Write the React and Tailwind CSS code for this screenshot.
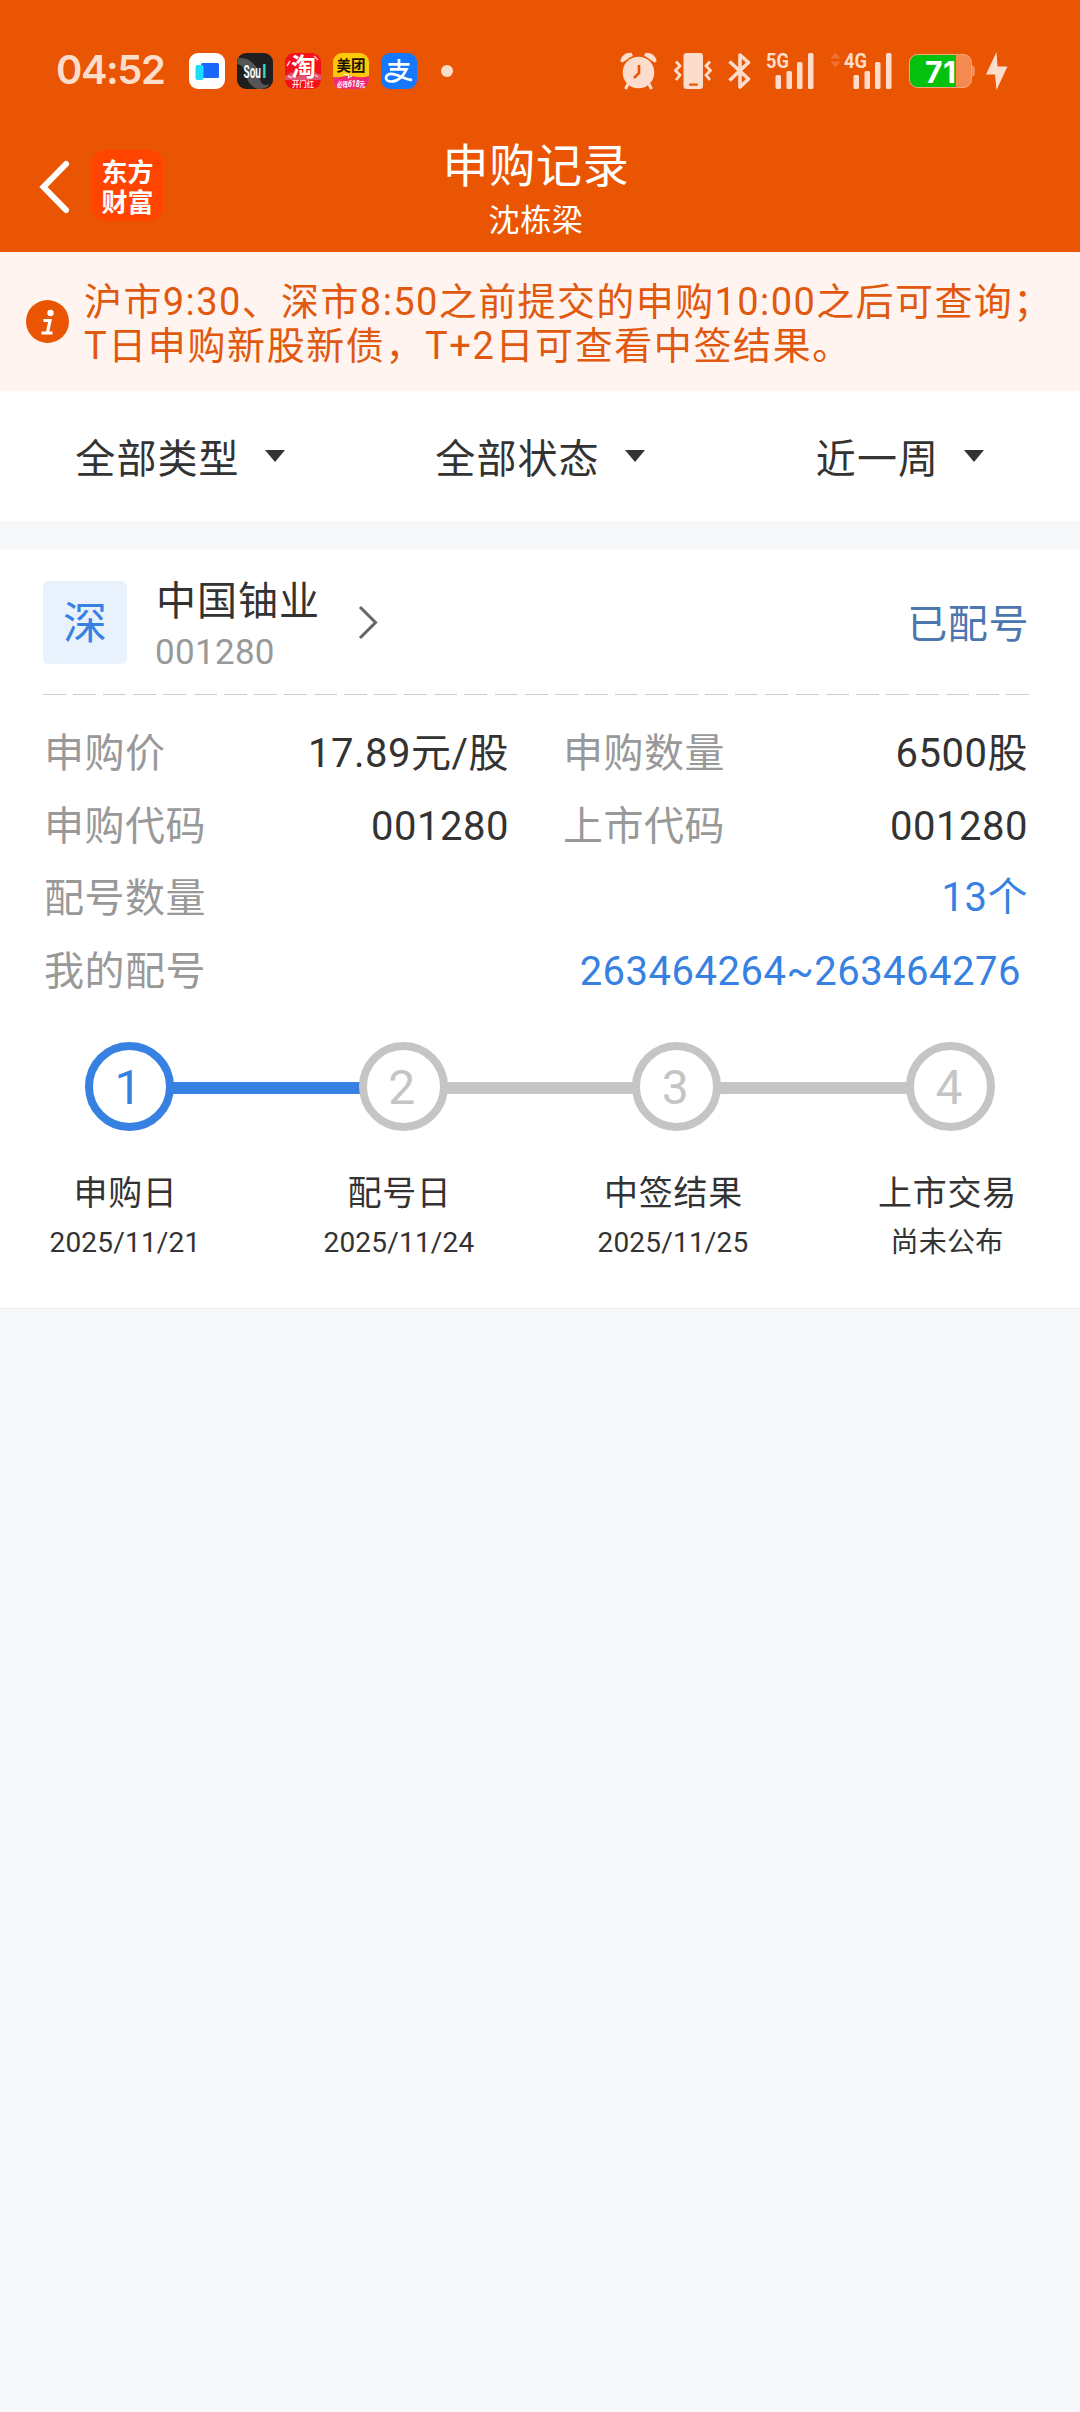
const FILTERS = ['全部类型', '全部状态', '近一周'];

const STEPS = [
    { title: '申购日', date: '2025/11/21', active: true },
    { title: '配号日', date: '2025/11/24' },
    { title: '中签结果', date: '2025/11/25' },
    { title: '上市交易', date: '尚未公布' },
];

const SignalBars = ({ label, arrows }) => (
    <svg className="overflow-visible" width={arrows ? 61 : 48} height="38" viewBox={arrows ? '-13 0 61 38' : '0 0 48 38'} fill="#fcddcb">
        {arrows && (
            <g fill="#f07234">
                <path d="M-8.5 0.5l5 6h-10z" />
                <path d="M-8.5 15.5l5-6h-10z" />
            </g>
        )}
        <text x="0" y="16" fontSize="21" fontWeight="700" textLength="23" lengthAdjust="spacingAndGlyphs" className="font-['Roboto']">
            {label}
        </text>
        <rect x="9.5" y="23" width="5.5" height="14" rx="1.5" />
        <rect x="20.5" y="19" width="5.5" height="18" rx="1.5" />
        <rect x="31" y="10" width="5.5" height="27" rx="1.5" />
        <rect x="42" y="1" width="5.5" height="36" rx="1.5" />
    </svg>
);

const AppIcons = () => (
    <div className="flex gap-3">
        <svg width="36" height="36" viewBox="0 0 36 36">
            <rect width="36" height="36" rx="9" fill="#fff" />
            <rect x="12" y="10" width="18" height="15" rx="1.5" fill="#1b66ff" />
            <rect x="6.5" y="12" width="8" height="15" rx="2" fill="#1edcfc" />
        </svg>
        <svg className="overflow-visible" width="36" height="36" viewBox="0 0 36 36">
            <rect width="36" height="36" rx="9" fill="#1f1f1f" />
            <path d="M1 5C12 4 20 11 22 22s6 11 11 9c-3 4-6 5-12 5-8-2-11-9-12-15S5 12 0 11z" fill="#555" />
            <text x="6.5" y="25" fontSize="18" fontWeight="600" fill="#fff" textLength="17.5" lengthAdjust="spacingAndGlyphs" className="font-['Roboto']">
                Sou
            </text>
            <text x="25" y="25" fontSize="18" fontWeight="600" fill="#2ed8c3" className="font-['Roboto']">
                l
            </text>
        </svg>
        <svg className="overflow-visible" width="36" height="36" viewBox="0 0 36 36">
            <rect width="36" height="36" rx="9" fill="#f5101c" />
            <path d="M0 23l7-4 4 5 6-3 7 3 5-5 7 3v5H0z" fill="#e0526f" />
            <path d="M2 13l3-5M29 3l4 4M3 23l4 2M30 22l3 2" stroke="#ffc9c0" strokeWidth="1.5" />
            <text x="6" y="23" fontSize="25" fontWeight="700" fill="#fff" className="font-['Noto_Sans_CJK_SC']">
                淘
            </text>
            <text x="7" y="34" fontSize="8" fontWeight="500" fill="#fff" textLength="22" lengthAdjust="spacingAndGlyphs" className="font-['Noto_Sans_CJK_SC']">
                开门红
            </text>
        </svg>
        <svg className="overflow-visible" width="36" height="36" viewBox="0 0 36 36">
            <rect width="36" height="36" rx="9" fill="#ffc80a" />
            <path d="M0 24c9 1 12-2 18-1s12 2 18 0v3a9 9 0 0 1-9 10H9a9 9 0 0 1-9-10z" fill="#ee2b72" />
            <path d="M11 21l5 1-1 3 4-2" fill="none" stroke="#fff" strokeWidth="1" />
            <text x="3.5" y="18" fontSize="15" fontWeight="700" fill="#1a1200" textLength="29" lengthAdjust="spacingAndGlyphs" className="font-['Noto_Sans_CJK_SC']">
                美团
            </text>
            <text x="4" y="33.5" fontSize="7" fontWeight="700" fill="#fff" textLength="28" lengthAdjust="spacingAndGlyphs" className="font-['Roboto','Noto_Sans_CJK_SC']">
                必得<tspan fontSize="9" fontStyle="italic">618</tspan>元
            </text>
        </svg>
        <svg width="36" height="36" viewBox="0 0 36 36">
            <rect width="36" height="36" rx="9" fill="#1677ff" />
            <path
                d="M7.5 11.3h21M18 6v10M9 16.3h16.500c-2.500 6-8.500 12.200-15 12.200-3.600 0-5.500-1.500-5.500-3.600 0-2.300 2.200-4 5.500-4 5.500 0 11 4.600 20.500 6.300"
                fill="none"
                stroke="#fff"
                strokeWidth="2.700"
            />
        </svg>
    </div>
);

const StatusBar = () => (
    <div className="flex h-[142px] items-center pr-[72px] pl-[56px]">
        <span className="w-[133px] pb-[2px] font-['Inter'] text-[40px] leading-none font-semibold tracking-[-1.5px] text-[#fcddcb]">04:52</span>
        <AppIcons />
        <span className="ml-6 size-3 rounded-full bg-[#fcddcb]" />

        <svg className="ml-auto" width="37" height="38" viewBox="0 0 37 38" fill="#fcddcb">
            <path d="M.5 9.5C.5 4 5.5.5 11.5.8L13 4 2.500 10.5zM36.500 9.5C36.500 4 31.500.5 25.500.8L24 4l10.500 6.500z" />
            <circle cx="18.5" cy="20.5" r="17.2" fill="#ea5504" />
            <circle cx="18.5" cy="20.5" r="15.8" />
            <path d="M8 32l-2.500 5M29 32l2.500 5" stroke="#fcddcb" strokeWidth="3" />
            <path d="M19 13v8l-5 5" fill="none" stroke="#ea5504" strokeWidth="2.600" />
        </svg>
        <svg className="ml-[17px]" width="38" height="38" viewBox="0 0 38 38">
            <rect x="9.5" y="1" width="19.5" height="36" rx="3" fill="#fcddcb" />
            <rect x="15" y="31.5" width="9" height="2.200" rx="1" fill="#ea5504" />
            <path d="M2 9.500l4 4.500-4.500 4.500 4.500 4.500-4 5M36 9.500L32 14l4.500 4.500L32 23l4 5" fill="none" stroke="#fcddcb" strokeWidth="2.800" />
        </svg>
        <svg className="ml-[16px]" width="23" height="38" viewBox="0 0 23 38">
            <path d="M1.500 9.500L20.500 27 12 35V3l8.500 7.500L1.500 28.500" fill="none" stroke="#fcddcb" strokeWidth="3.600" strokeLinejoin="round" />
        </svg>
        <div className="ml-[15px]">
            <SignalBars label="5G" />
        </div>
        <div className="ml-[17px]">
            <SignalBars label="4G" arrows />
        </div>
        <svg className="ml-[17px]" width="66" height="34" viewBox="0 0 66 34">
            <rect x=".5" y=".5" width="62" height="33" rx="8" fill="#f48a50" />
            <path d="M47 .5H8.500a8 8 0 0 0-8 8v17a8 8 0 0 0 8 8H47z" fill="#04c00f" />
            <rect x=".5" y=".5" width="62" height="33" rx="8" fill="none" stroke="#f9a67c" />
            <path d="M63 11.500q3 0 3 3v5q0 3-3 3z" fill="#f48a50" />
            <text x="16" y="28.5" fontSize="30" fontWeight="700" fill="#fff" textLength="31" className="font-['Inter']">
                71
            </text>
        </svg>
        <svg className="ml-[11px]" width="22" height="38" viewBox="0 0 22 38" fill="#fcddcb">
            <path d="M10.500 0L0 22.500h9L10.500 38 21.500 14.500H11.500z" />
        </svg>
    </div>
);

const Header = () => (
    <header className="h-[252px] bg-[#ea5504] text-white">
        <StatusBar />
        <div className="grid h-[110px] grid-cols-[1fr_auto_1fr]">
            <div className="flex items-start pt-2 pl-[38px]">
                <svg className="mt-[9px]" width="34" height="56" viewBox="0 0 34 56">
                    <path d="M28 5L5.500 28 28 51" fill="none" stroke="#fff" strokeWidth="6" strokeLinecap="round" />
                </svg>
                <div className="ml-5 flex size-[71px] items-center justify-center rounded-[14px] bg-[#ff4400] font-['Noto_Sans_CJK_SC'] text-[26px] leading-[30px] font-bold">
                    <p>
                        东方
                        <br />
                        财富
                    </p>
                </div>
            </div>
            <div className="pr-[8px] text-center">
                <h1 className="text-[46px] leading-[49px] tracking-[0.8px]">申购记录</h1>
                <p className="text-[31px] leading-[60px] tracking-[0.6px]">沈栋梁</p>
            </div>
        </div>
    </header>
);

const Notice = () => (
    <div className="flex h-[139px] bg-[#fff4ef] pt-[28px] pl-[26px] text-[#e0590f]">
        <svg className="mt-[20px] shrink-0" width="43" height="43" viewBox="0 0 43 43">
            <circle cx="21.5" cy="21.5" r="21.5" fill="#ea5504" />
            <circle cx="24.5" cy="13" r="3.2" fill="#fff" />
            <path d="M17.500 20.500h6.500l-2.500 12M15.500 33h11" fill="none" stroke="#fff" strokeWidth="3.200" />
        </svg>
        <p className="ml-[15px] text-[38px] leading-[44px] tracking-[1.4px] whitespace-nowrap">
            沪市9:30、深市8:50之前提交的申购10:00之后可查询；
            <br />
            <span className="tracking-[1.6px]">T日申购新股新债，T+2日可查看中签结果。</span>
        </p>
    </div>
);

const FilterBar = () => (
    <div className="grid h-[130px] grid-cols-3 bg-white">
        {FILTERS.map((name) => (
            <button key={name} className="flex items-center justify-center">
                <span className="pt-[7px] text-[40px] leading-none tracking-[1.1px] text-[#333]">{name}</span>
                <svg className="ml-[25px]" width="20" height="12" viewBox="0 0 20 12">
                    <path d="M0 0h20L10 12z" fill="#333" />
                </svg>
            </button>
        ))}
    </div>
);

const Field = ({ label, value }) => (
    <div className="flex justify-between">
        <span className="pl-px text-[#999]">{label}</span>
        <span className="text-[#333]">{value}</span>
    </div>
);

const Steps = () => (
    <div className="mt-[34px]">
        <div className="flex items-center px-[85px]">
            {STEPS.map((step, i) => (
                <div key={step.title} className={i > 0 ? 'flex flex-1 items-center' : 'flex items-center'}>
                    {i > 0 && <div className={`-mx-px mt-[3px] h-3 flex-1 ${i === 1 ? 'bg-[#3681e1]' : 'bg-[#c5c5c5]'}`} />}
                    <div
                        className={`flex size-[89px] items-center justify-center rounded-full border-[8.5px] bg-white pt-[3px] pr-[3px] text-[48px] leading-none ${
                            step.active ? 'border-[#3681e1] text-[#3681e1]' : 'border-[#c5c5c5] text-[#c5c5c5]'
                        }`}
                    >
                        {i + 1}
                    </div>
                </div>
            ))}
        </div>
        <div className="mt-[36px] flex justify-between pr-[53px] pl-[45px] text-center text-[#333]">
            {STEPS.map((step) => (
                <div key={step.title} className="w-[160px]">
                    <div className="pl-px text-[34px] leading-[52px] tracking-[0.7px]">{step.title}</div>
                    <div className="text-[28px] leading-[48px] tracking-[0.2px]">{step.date}</div>
                </div>
            ))}
        </div>
    </div>
);

const RecordCard = () => (
    <section className="mt-[29px] h-[759px] border-b border-[#ebedef] bg-white">
        <div className="flex h-[144px] items-start pt-[31px] pr-[51px] pl-[43px]">
            <div className="flex h-[83px] w-[84px] items-center justify-center rounded-md bg-[#e9f2fc] pt-[2px] text-[44px] text-[#3681e1]">
                <span className="leading-none">深</span>
            </div>
            <div className="ml-[29px]">
                <div className="text-[40px] leading-[42px] tracking-[1px] text-[#333]">中国铀业</div>
                <div className="-ml-px text-[35px] leading-[59px] tracking-[0.3px] text-[#999]">001280</div>
            </div>
            <svg className="mt-[24px] ml-[37px]" width="22" height="35" viewBox="0 0 22 35">
                <path d="M3 2l15.500 15.500L3 33" fill="none" stroke="#666" strokeWidth="3" />
            </svg>
            <span className="ml-auto pt-[2px] text-[40px] leading-[84px] tracking-[0.6px] text-[#4c76ae]">已配号</span>
        </div>
        <div className="mr-[51px] ml-[43px] h-px bg-[repeating-linear-gradient(90deg,#ccc_0_23px,transparent_23px_30.1px)]" />

        <div className="pt-[23px] pr-[52px] pl-[43px] text-[40px] leading-[72.6px] tracking-[0.5px]">
            <div className="grid grid-cols-[466px_466px] justify-between">
                <Field label="申购价" value="17.89元/股" />
                <Field label="申购数量" value="6500股" />
                <Field label="申购代码" value="001280" />
                <Field label="上市代码" value="001280" />
            </div>
            <div className="flex justify-between">
                <span className="pl-px text-[#999]">配号数量</span>
                <span className="-mt-px mb-px text-[#3681e1]">13个</span>
            </div>
            <div className="flex justify-between">
                <span className="pl-px text-[#999]">我的配号</span>
                <span className="pr-[7px] text-[#3681e1]">263464264~263464276</span>
            </div>
        </div>

        <Steps />
    </section>
);

export default function App() {
    return (
        <div className="min-h-[2412px] w-[1080px] overflow-hidden bg-[#f6f8fa] font-['Roboto','Noto_Sans_CJK_SC',sans-serif]">
            <Header />
            <Notice />
            <FilterBar />
            <RecordCard />
        </div>
    );
}
